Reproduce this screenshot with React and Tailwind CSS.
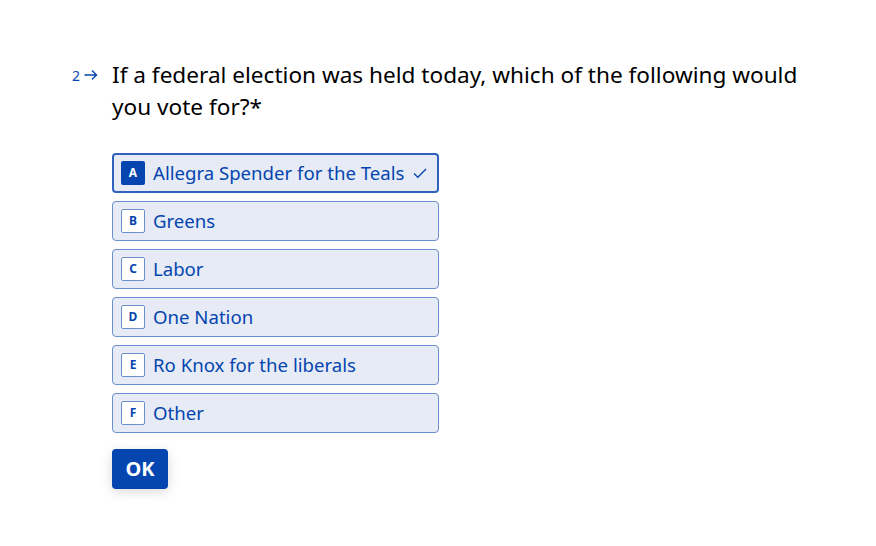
import React from 'react';

const options = [
    { key: 'A', label: 'Allegra Spender for the Teals', selected: true },
    { key: 'B', label: 'Greens' },
    { key: 'C', label: 'Labor' },
    { key: 'D', label: 'One Nation' },
    { key: 'E', label: 'Ro Knox for the liberals' },
    { key: 'F', label: 'Other' },
];

export default function App() {
    return (
        <div className="w-[876px] h-[546px] bg-white overflow-hidden" style={{ fontFamily: '"Noto Sans", "Open Sans", sans-serif' }}>
            <div className="flex pt-[59px] pl-[72px]">
                <div className="flex items-center h-8 gap-[3px] text-[#0445AF] w-[40px]">
                    <span className="text-[14px]">2</span>
                    <svg width="16" height="16" viewBox="0 0 16 16" fill="none" stroke="#0445AF" strokeWidth="1.4">
                        <path d="M1.5 8h12.5M9 3.5L13.5 8 9 12.5" />
                    </svg>
                </div>
                <div className="flex flex-col">
                    <h1 className="text-[22.6px] leading-8 text-black w-[700px] font-normal">
                        If a federal election was held today, which of the following would you vote for?*
                    </h1>
                    <div className="mt-[30px] flex flex-col gap-2 w-[327px]">
                        {options.map((o) => (
                            <div
                                key={o.key}
                                className={`h-10 rounded-[4px] bg-[#E6EBF6] flex items-center px-2 ${o.selected ? 'border-2 border-[#2F62BC] pl-[7px] pr-[9px]' : 'border border-[#6A8FCF]'}`}
                            >
                                <div
                                    className={`w-6 h-6 rounded-[2px] flex items-center justify-center text-[12px] font-bold ${o.selected ? 'bg-[#0445AF] text-white' : 'bg-white border border-[#6A8FCF] text-[#0445AF]'}`}
                                >
                                    {o.key}
                                </div>
                                <span className="ml-2 text-[18.6px] text-[#0445AF] flex-1">{o.label}</span>
                                {o.selected && (
                                    <svg width="16" height="16" viewBox="0 0 16 16" fill="none" stroke="#0445AF" strokeWidth="1.3">
                                        <path d="M2 8.5l3.8 3.8L14 4" />
                                    </svg>
                                )}
                            </div>
                        ))}
                    </div>
                    <button className="mt-4 w-14 h-10 rounded-[4px] bg-[#0445AF] text-white text-[20px] font-bold shadow-[0_3px_12px_rgba(0,0,0,0.15)]">
                        OK
                    </button>
                </div>
            </div>
        </div>
    );
}
